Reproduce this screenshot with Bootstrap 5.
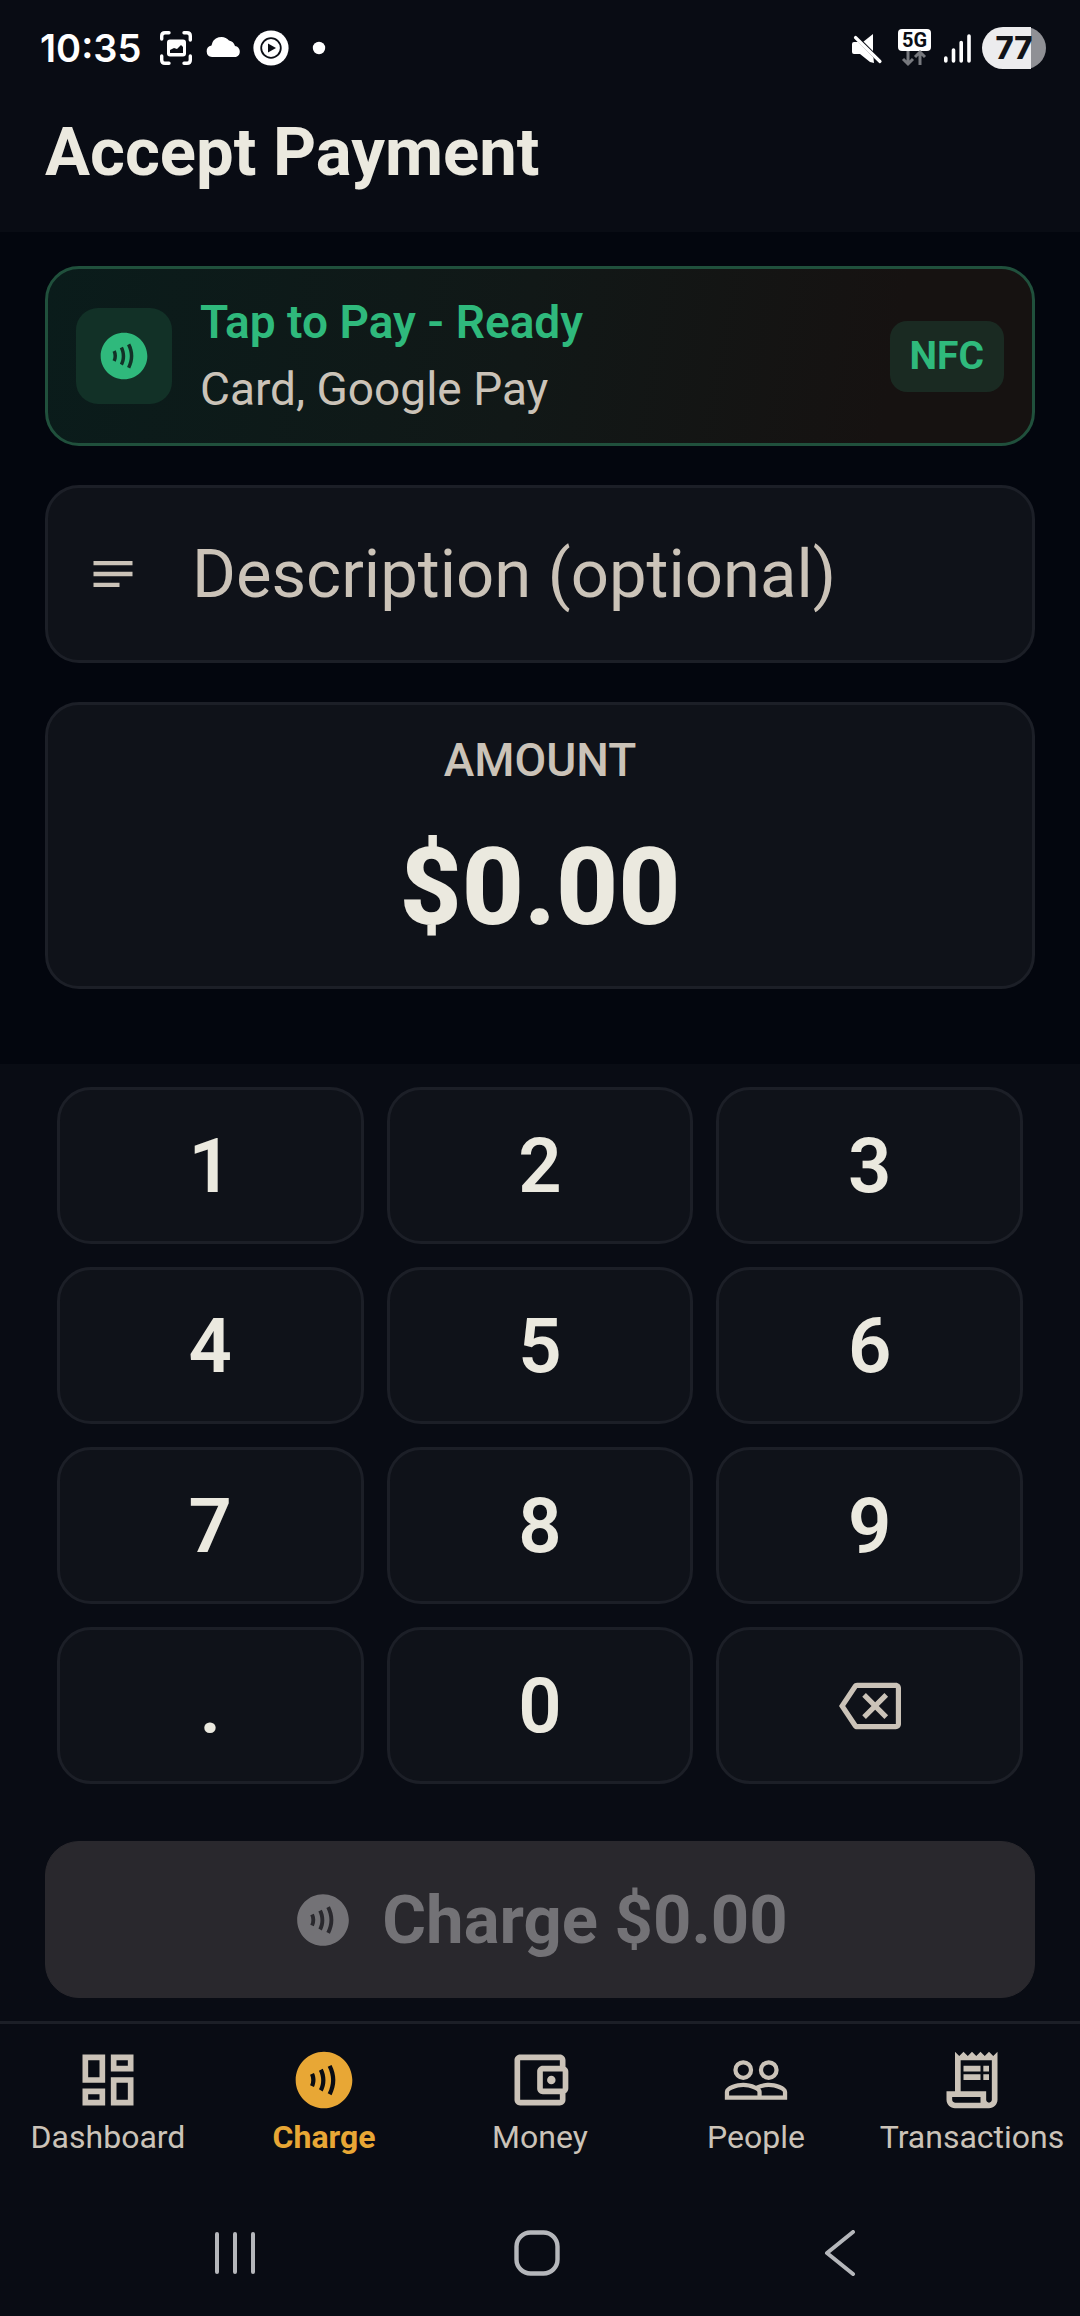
<!DOCTYPE html>
<html lang="en" data-bs-theme="dark">
<head>
<meta charset="utf-8">
<meta name="viewport" content="width=device-width, initial-scale=1">
<title>Accept Payment</title>
<link href="https://cdn.jsdelivr.net/npm/bootstrap@5.3.0/dist/css/bootstrap.min.css" rel="stylesheet">
<style>
  :root {
    --surface: #090c14;
    --canvas: #03060e;
    --panel: #0f1219;
    --line: #1c1f27;
    --cream: #ebe9df;
    --sand: #cbc3b8;
    --green: #2fb97c;
    --amber: #e8a735;
  }
  body { background: var(--surface); color: var(--cream); font-family: Roboto, "Liberation Sans", sans-serif; }
  svg { display: block; flex: none; }

  .status-strip { height: 96px; padding: 0 34px 0 40px; color: #fff; font-family: Inter, Roboto, sans-serif; }
  .status-time { font-size: 38px; font-weight: 600; line-height: 44px; }
  .app-header { padding: 16px 45px 40px; }
  .app-title { font-size: 67px; font-weight: 700; line-height: 80px; color: var(--cream); }

  .form-zone { background: var(--canvas); padding: 34px 45px 75px; gap: 39px; }
  .panel-box { background: var(--panel); border: 3px solid var(--line); border-radius: 34px; }
  .tap-panel { border-color: #20503c; background: linear-gradient(100deg, #0a1c1b 0%, #111817 48%, #161211 85%); padding: 0 28px; height: 180px; gap: 28px; }
  .tap-icon { width: 96px; height: 96px; border-radius: 22px; background: #123127; color: var(--green); }
  .tap-text { font-size: 46px; line-height: 67px; }
  .tap-title { color: var(--green); font-weight: 600; }
  .muted-text { color: var(--sand); }
  .nfc-tag { background: #1a2a22; color: var(--green); border-radius: 17px; padding: 0 20px; font-size: 39px; font-weight: 700; line-height: 71px; }

  .note-field { height: 178px; padding: 0 39px; gap: 53px; color: var(--sand); }
  .note-field .form-control, .note-field .form-control:focus { background: transparent; border: 0; box-shadow: none; padding: 0; font-size: 67px; line-height: 80px; height: 80px; color: var(--cream); }
  .note-field .form-control::placeholder { color: var(--sand); opacity: 1; }

  .amount-panel { padding: 29px 28px 36px; }
  .amount-label { font-size: 46px; font-weight: 500; line-height: 52px; margin-bottom: 38px; }
  .amount-value { font-size: 108px; font-weight: 800; line-height: 126px; }

  .pay-zone { padding: 23px 45px; }
  .keypad { padding: 0 12px; margin-bottom: 57px; }
  .keypad .row { --bs-gutter-x: 23px; --bs-gutter-y: 23px; }
  .key-btn { --bs-btn-color: var(--cream); --bs-btn-hover-color: var(--cream); --bs-btn-hover-bg: #191d26; --bs-btn-hover-border-color: var(--line); height: 157px; font-size: 76px; font-weight: 600; line-height: 90px; padding: 0; }
  .key-btn.muted-text { --bs-btn-color: var(--sand); }
  .charge-btn { --bs-btn-disabled-color: #737276; --bs-btn-disabled-bg: #29282d; --bs-btn-disabled-border-color: #29282d; --bs-btn-disabled-opacity: 1; height: 157px; border-radius: 34px; gap: 28px; padding: 0; font-size: 67px; font-weight: 700; line-height: 80px; }

  .tab-strip { border-top: 3px solid var(--line); padding: 22px 0 26px; }
  .tab-link { width: 20%; color: var(--sand); text-decoration: none; font-size: 32px; line-height: 36px; gap: 5px; }
  .tab-link.active { color: var(--amber); font-weight: 700; }

  .system-strip { height: 135px; color: #b5b7bb; padding: 8px 89px 0 84px; }
  .system-btn { flex: 1; border: 0; background: none; color: inherit; padding: 0; height: 100px; }
</style>
<script src="https://cdn.jsdelivr.net/npm/bootstrap@5.3.0/dist/js/bootstrap.bundle.min.js"></script>
</head>
<body>
<svg class="d-none" aria-hidden="true">
  <symbol id="contactless" viewBox="0 0 24 24"><path fill="currentColor" fill-rule="evenodd" d="M12 2C6.48 2 2 6.48 2 12s4.48 10 10 10 10-4.48 10-10S17.52 2 12 2zM8.46 14.45L7.1 13.83c.28-.61.41-1.24.4-1.86-.01-.63-.14-1.24-.4-1.8l1.36-.63c.35.75.53 1.56.54 2.4.01.86-.17 1.7-.54 2.51zM11.53 16.02l-1.3-.74c.52-.92.78-1.98.78-3.15 0-1.19-.27-2.33-.8-3.4l1.34-.67c.64 1.28.96 2.65.96 4.07 0 1.43-.33 2.74-.98 3.89zM14.67 17.34l-1.35-.66c.78-1.6 1.18-3.18 1.18-4.69 0-1.51-.4-3.07-1.18-4.64l1.34-.67C15.56 8.45 16 10.23 16 11.99c0 1.74-.44 3.54-1.33 5.35z"/></symbol>
</svg>

<div class="d-flex flex-column min-vh-100">
  <div class="status-strip d-flex align-items-center justify-content-between">
    <div class="d-flex align-items-center">
      <span class="status-time">10:35</span>
      <svg class="ms-3" width="136" height="40" viewBox="0 0 136 40" role="img" aria-label="Notifications">
        <g fill="none" stroke="#fff" stroke-width="3.4" stroke-linecap="round">
          <path d="M4.700 11V8q0-3.300 3.300-3.300H12M27 4.700h3q3.300 0 3.300 3.300V12M33.300 28v4q0 3.300-3.300 3.300H27M12 35.300H8q-3.300 0-3.300-3.300V28"/>
        </g>
        <rect x="10" y="11.500" width="19" height="17" rx="3" fill="#fff"/>
        <path d="M13 25v-3l4-2 3 1 4-4 2 2v6z" fill="#0b0e15"/>
        <path fill="#fff" d="M55 29a5.800 5.800 0 0 1-.5-11.500 A10 10 0 0 1 72 12.500 a8 8 0 0 1 6 5.500 A5.700 5.700 0 0 1 79 29z"/>
        <circle cx="114" cy="20" r="17.600" fill="#fff"/>
        <circle cx="114" cy="20" r="9.800" fill="none" stroke="#0b0e15" stroke-width="1.800"/>
        <path d="M111 15.500v9l8-4.500z" fill="#0b0e15"/>
      </svg>
      <svg class="ms-3" width="20" height="14" viewBox="0 0 20 14" aria-hidden="true"><circle cx="10" cy="7" r="6.200" fill="#fff"/></svg>
    </div>
    <svg width="196" height="46" viewBox="850 25 196 46" role="img" aria-label="Muted, 5G, signal, battery 77 percent">
      <path fill="#fff" d="M852 44q0-2 2-2h9l10-8v20l1 9-4-1-10-8h-6q-2 0-2-2z"/>
      <path d="M852 33l32 32" stroke="#090c14" stroke-width="4"/>
      <path d="M855.500 37.500L880 61.500" stroke="#fff" stroke-width="3.200" stroke-linecap="round"/>
      <rect x="898" y="29" width="33" height="22" rx="4" fill="#fff"/>
      <text x="914.500" y="46.500" text-anchor="middle" font-family="Roboto, sans-serif" font-weight="700" font-size="20" fill="#0b0e15">5G</text>
      <path fill="none" stroke="#77797e" stroke-width="3" d="M908 51v12M903 59l5 5 5-5M920 65V53M915 57l5-5 5 5"/>
      <g stroke="#fff" stroke-width="3.600" stroke-linecap="round"><path d="M945.800 58v3M953.500 50v11M961.200 42.500V61M969 36v25"/></g>
      <path fill="#8f9095" d="M1025 27a21 21 0 0 1 0 42z"/>
      <path fill="#ececee" d="M1003 27h28v42h-28a21 21 0 0 1 0-42z"/>
      <text x="1014" y="59" text-anchor="middle" font-family="Inter, sans-serif" font-weight="800" font-size="31" fill="#111318">77</text>
    </svg>
  </div>

  <header class="app-header"><h1 class="app-title mb-0">Accept Payment</h1></header>

  <main>
    <section class="form-zone d-flex flex-column">
      <div class="panel-box tap-panel d-flex align-items-center">
        <div class="tap-icon d-flex align-items-center justify-content-center">
          <svg width="56" height="56" aria-hidden="true"><use href="#contactless"/></svg>
        </div>
        <div class="tap-text flex-grow-1">
          <div class="tap-title">Tap to Pay - Ready</div>
          <div class="muted-text">Card, Google Pay</div>
        </div>
        <span class="nfc-tag">NFC</span>
      </div>

      <div class="panel-box note-field d-flex align-items-center">
        <label for="note">
          <svg width="52" height="52" viewBox="0 0 24 24" role="img" aria-label="Description"><path fill="currentColor" d="M3 18h12v-2H3v2zM3 6v2h18V6H3zm0 7h18v-2H3v2z"/></svg>
        </label>
        <input id="note" class="form-control" type="text" placeholder="Description (optional)">
      </div>

      <div class="panel-box amount-panel text-center">
        <div class="amount-label muted-text">AMOUNT</div>
        <div class="amount-value">$0.00</div>
      </div>
    </section>

    <section class="pay-zone">
      <div class="keypad">
        <div class="row row-cols-3">
          <div class="col"><button type="button" class="btn key-btn panel-box w-100">1</button></div>
          <div class="col"><button type="button" class="btn key-btn panel-box w-100">2</button></div>
          <div class="col"><button type="button" class="btn key-btn panel-box w-100">3</button></div>
          <div class="col"><button type="button" class="btn key-btn panel-box w-100">4</button></div>
          <div class="col"><button type="button" class="btn key-btn panel-box w-100">5</button></div>
          <div class="col"><button type="button" class="btn key-btn panel-box w-100">6</button></div>
          <div class="col"><button type="button" class="btn key-btn panel-box w-100">7</button></div>
          <div class="col"><button type="button" class="btn key-btn panel-box w-100">8</button></div>
          <div class="col"><button type="button" class="btn key-btn panel-box w-100">9</button></div>
          <div class="col"><button type="button" class="btn key-btn panel-box w-100">.</button></div>
          <div class="col"><button type="button" class="btn key-btn panel-box w-100">0</button></div>
          <div class="col">
            <button type="button" class="btn key-btn panel-box w-100 muted-text d-flex align-items-center justify-content-center" aria-label="Delete">
              <svg width="62" height="62" viewBox="0 0 24 24"><path fill="currentColor" d="M22 3H7c-.69 0-1.230.35-1.590.88L0 12l5.410 8.110c.36.53.9.89 1.590.89h15c1.100 0 2-.9 2-2V5c0-1.100-.9-2-2-2zm0 16H7.070L2.400 12l4.660-7H22v14zM10.410 17L14 13.410 17.590 17 19 15.590 15.410 12 19 8.410 17.590 7 14 10.590 10.410 7 9 8.410 12.590 12 9 15.590z"/></svg>
            </button>
          </div>
        </div>
      </div>
      <button type="button" class="btn charge-btn w-100 d-flex align-items-center justify-content-center" disabled>
        <svg width="62" height="62" aria-hidden="true"><use href="#contactless"/></svg>
        <span>Charge $0.00</span>
      </button>
    </section>
  </main>

  <nav class="tab-strip d-flex" aria-label="Main">
    <a href="#" class="tab-link d-flex flex-column align-items-center">
      <svg width="68" height="68" viewBox="0 0 24 24" aria-hidden="true"><path fill="currentColor" d="M19 5v2h-4V5h4M9 5v6H5V5h4m10 8v6h-4v-6h4M9 17v2H5v-2h4M21 3h-8v6h8V3zM11 3H3v10h8V3zm10 8h-8v10h8V11zm-10 4H3v6h8v-6z"/></svg>
      <span>Dashboard</span>
    </a>
    <a href="#" class="tab-link active d-flex flex-column align-items-center" aria-current="page">
      <svg width="68" height="68" aria-hidden="true"><use href="#contactless"/></svg>
      <span>Charge</span>
    </a>
    <a href="#" class="tab-link d-flex flex-column align-items-center">
      <svg width="68" height="68" viewBox="0 0 24 24" aria-hidden="true"><path fill="currentColor" d="M21 7.280V5c0-1.100-.9-2-2-2H5c-1.110 0-2 .9-2 2v14c0 1.100.89 2 2 2h14c1.100 0 2-.9 2-2v-2.280c.59-.35 1-.98 1-1.720V9c0-.74-.41-1.370-1-1.720zM20 9v6h-7V9h7zM5 19V5h14v2h-6c-1.100 0-2 .9-2 2v6c0 1.100.9 2 2 2h6v2H5z"/><circle cx="16" cy="12" r="1.500" fill="currentColor"/></svg>
      <span>Money</span>
    </a>
    <a href="#" class="tab-link d-flex flex-column align-items-center">
      <svg width="68" height="68" viewBox="0 0 24 24" aria-hidden="true"><path fill="currentColor" fill-rule="evenodd" d="M16.500 13c-1.200 0-3.070.34-4.500 1-1.430-.67-3.300-1-4.500-1C5.330 13 1 14.080 1 16.250V19h22v-2.750c0-2.170-4.330-3.250-6.500-3.250zm-4 4.500h-10v-1.250c0-.54 2.560-1.750 5-1.750s5 1.210 5 1.750v1.250zm9 0H14v-1.250c0-.46-.2-.86-.52-1.220.88-.3 1.960-.53 3.020-.53 2.440 0 5 1.210 5 1.750v1.250z"/><g fill="none" stroke="currentColor" stroke-width="1.500"><circle cx="7.500" cy="8.500" r="2.750"/><circle cx="16.500" cy="8.500" r="2.750"/></g></svg>
      <span>People</span>
    </a>
    <a href="#" class="tab-link d-flex flex-column align-items-center">
      <svg width="68" height="68" viewBox="0 0 24 24" aria-hidden="true"><path fill="currentColor" d="M19.500 3.500L18 2l-1.500 1.500L15 2l-1.500 1.500L12 2l-1.500 1.500L9 2 7.500 3.500 6 2v14H3v3c0 1.660 1.340 3 3 3h12c1.660 0 3-1.340 3-3V2l-1.500 1.500zM15 20H6c-.55 0-1-.45-1-1v-1h10v2zm4-1c0 .55-.45 1-1 1s-1-.45-1-1v-3H8V5h11v14zM9 7h6v2H9zM16 7h2v2h-2zM9 10h6v2H9zM16 10h2v2h-2z"/></svg>
      <span>Transactions</span>
    </a>
  </nav>

  <div class="system-strip d-flex align-items-center">
    <button type="button" class="system-btn d-flex align-items-center justify-content-center" aria-label="Recent apps">
      <svg width="46" height="46" viewBox="0 0 46 46"><path stroke="currentColor" stroke-width="4" stroke-linecap="round" d="M5 4v38M23 4v38M41 4v38"/></svg>
    </button>
    <button type="button" class="system-btn d-flex align-items-center justify-content-center" aria-label="Home">
      <svg width="46" height="46" viewBox="0 0 46 46"><rect x="2.500" y="2.500" width="41" height="41" rx="14" fill="none" stroke="currentColor" stroke-width="4.400"/></svg>
    </button>
    <button type="button" class="system-btn d-flex align-items-center justify-content-center" aria-label="Back">
      <svg width="46" height="46" viewBox="0 0 46 46"><path fill="none" stroke="currentColor" stroke-width="4" stroke-linecap="round" stroke-linejoin="round" d="M36 2L10 23l26 21"/></svg>
    </button>
  </div>
</div>
</body>
</html>
